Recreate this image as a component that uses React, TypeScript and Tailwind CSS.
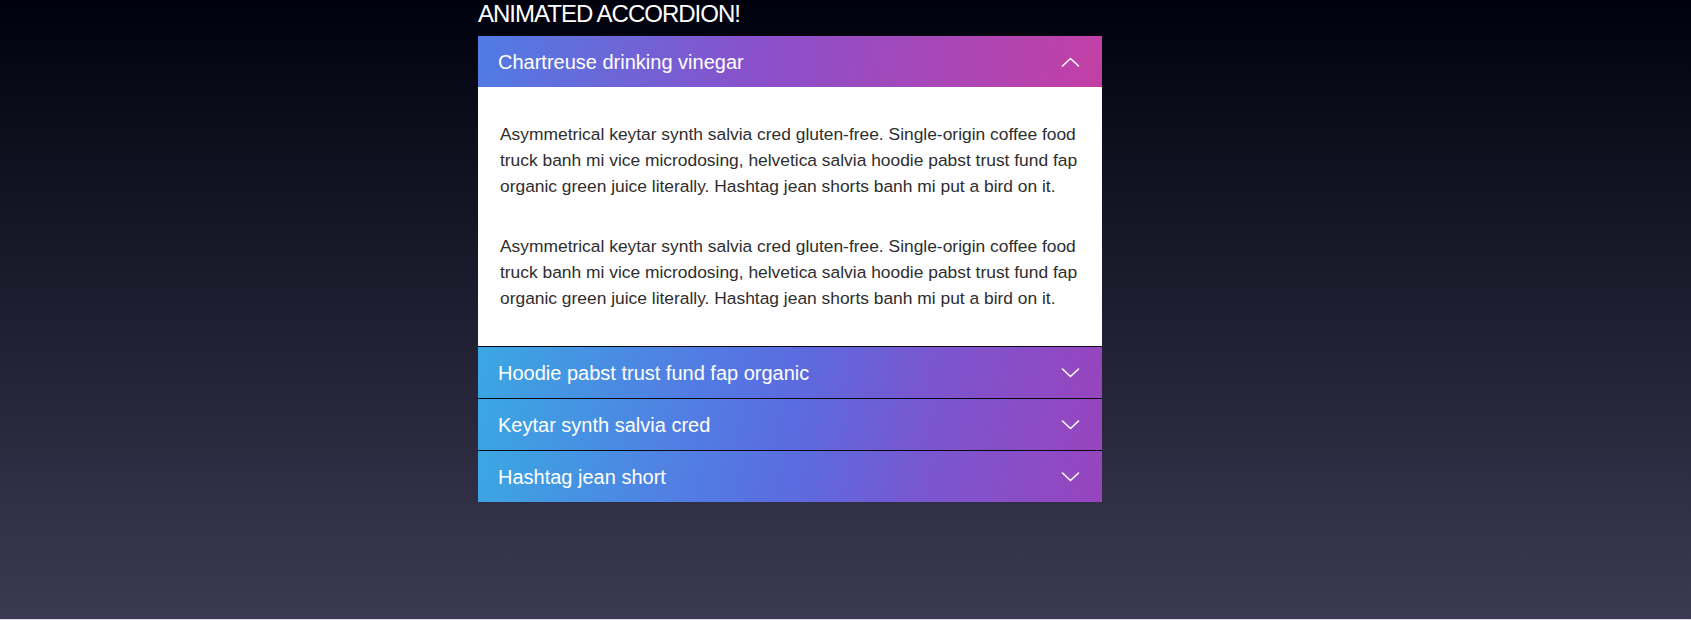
import React, { useState } from "react";

const items = [
  { title: "Chartreuse drinking vinegar" },
  { title: "Hoodie pabst trust fund fap organic" },
  { title: "Keytar synth salvia cred" },
  { title: "Hashtag jean short" },
];

const para =
  "Asymmetrical keytar synth salvia cred gluten-free. Single-origin coffee food truck banh mi vice microdosing, helvetica salvia hoodie pabst trust fund fap organic green juice literally. Hashtag jean shorts banh mi put a bird on it.";

function Chevron({ up }: { up: boolean }) {
  return (
    <svg width="19" height="10" viewBox="0 0 19 10" fill="none" className="block">
      {up ? (
        <polyline points="1.5,9 9.5,1.5 17.5,9" stroke="white" strokeWidth="1.6" strokeLinecap="round" strokeLinejoin="round" />
      ) : (
        <polyline points="1.5,1 9.5,8.5 17.5,1" stroke="white" strokeWidth="1.6" strokeLinecap="round" strokeLinejoin="round" />
      )}
    </svg>
  );
}

export default function App() {
  const [open, setOpen] = useState<number>(0);
  return (
    <div className="bg-[#dcdce0] min-h-[620px]" style={{ fontFamily: '"Liberation Sans", Arial, sans-serif' }}>
      <div className="h-[619px] bg-[linear-gradient(to_bottom,#01010d_0%,#3b3a53_100%)] pl-[478px]">
        <div className="w-[624px]">
          <h1 className="text-[24px] leading-[27px] tracking-[-1px] text-white h-[35px]">ANIMATED ACCORDION!</h1>
          {items.map((it, i) => {
            const isOpen = open === i;
            return (
              <div key={i} className="border-t border-[#0a0a14]">
                <button
                  onClick={() => setOpen(isOpen ? -1 : i)}
                  className={
                    "w-full h-[51px] flex items-center justify-between pl-[20px] pr-[22px] text-white text-[20px] text-left " +
                    (isOpen
                      ? "bg-[linear-gradient(100deg,#4f7ce4_0%,#8a50cb_45%,#c33fa5_100%)]"
                      : "bg-[linear-gradient(105deg,#3aa8e2_0%,#4f82e3_30%,#5a6ce0_50%,#7a56cf_72%,#9844bd_100%)]")
                  }
                >
                  <span>{it.title}</span>
                  <Chevron up={isOpen} />
                </button>
                {isOpen && (
                  <div className="bg-white pl-[22px] pr-[20px] pt-[34px] pb-[35px] flex flex-col gap-[34px] text-[17.4px] leading-[26px] text-[#2e2e2e]">
                    <p>{para}</p>
                    <p>{para}</p>
                  </div>
                )}
              </div>
            );
          })}
        </div>
      </div>
    </div>
  );
}
